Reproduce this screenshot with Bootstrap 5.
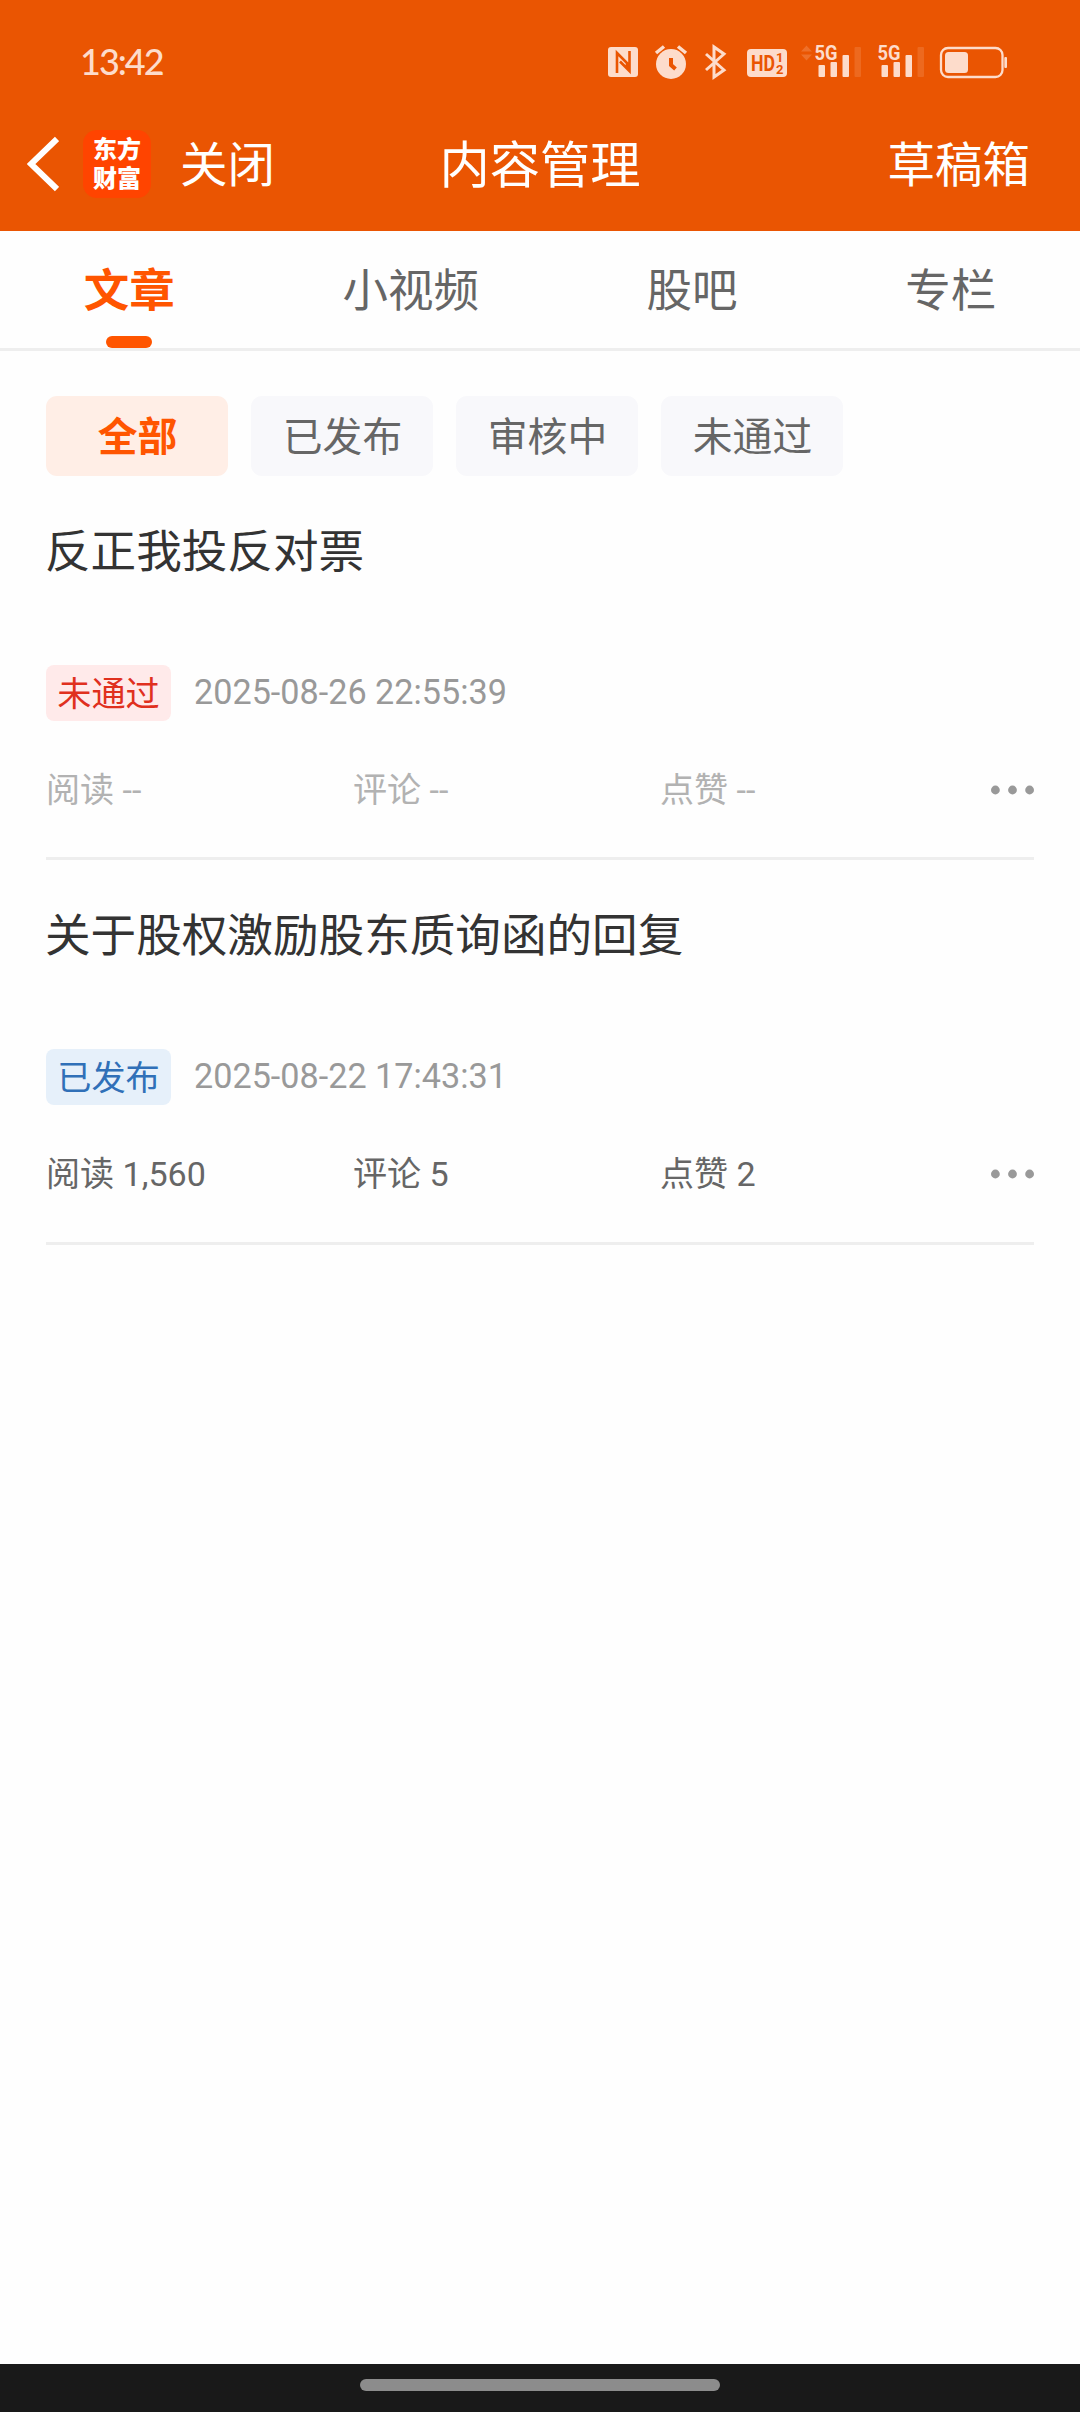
<!DOCTYPE html>
<html lang="zh-CN">
<head>
<meta charset="utf-8">
<meta name="viewport" content="width=device-width, initial-scale=1">
<title>内容管理</title>
<link href="https://cdn.jsdelivr.net/npm/bootstrap@5.3.0/dist/css/bootstrap.min.css" rel="stylesheet">
<style>
body { font-family: Roboto, "Noto Sans CJK SC", sans-serif; background: #fefefe; color: #333; line-height: 1; }
.app-head { background: #ea5502; height: 231px; }
.status-row { height: 124px; padding: 0 72px 0 80px; color: #fddccb; }
.clock { font: 500 36px Lato, sans-serif; letter-spacing: -2px; padding-bottom: 2px; }
.title-row { height: 80px; padding: 0 50px 0 27px; font-size: 47.5px; }
.title-row .side-link { padding-top: 6px; }
.page-title { font-size: 50.3px; line-height: 84px; }
.logo-box { width: 68px; height: 68px; border-radius: 14px; background: #ff4400; font: 900 24px/28.500px "Noto Sans CJK SC", sans-serif; margin-left: 24px; margin-right: 29px; padding-top: 4px; }
.tab-row { height: 120px; border-bottom: 3px solid #eee; font-size: 45.5px; color: #666; }
.tab-row .nav-link { color: #666; padding: 0; height: 117px; line-height: 121px; }
.tab-row .nav-link.active { color: #ff5500; font-weight: 700; }
.tab-row .nav-link.active::after { content: ""; position: absolute; left: 50%; bottom: 0; width: 46px; height: 12px; margin-left: -23px; border-radius: 6px; background: #ff5500; }
.main-pad { padding: 45px 46px 0; }
.chips { gap: 23px; }
.chips .btn { width: 182px; height: 80px; border: 0; border-radius: 11px; padding: 4px 0 0 1px; font-size: 39.8px; line-height: 80px; color: #666; background: #f8f8fb; display: flex; align-items: center; justify-content: center; }
.chips .btn.active { background: #ffeee6; color: #ff5500; font-weight: 700; }
.post { height: 384.5px; border-bottom: 3px solid #eee; padding-top: 46px; }
.post:first-of-type { height: 384px; }
.post-title { font-size: 45.6px; font-weight: 400; line-height: 62px; margin: 0 0 81px -1px; }
.tagline { height: 56px; font-size: 34.2px; color: #999; gap: 23px; }
.stamp { padding-bottom: 2px; }
.tag { width: 125px; height: 56px; border-radius: 8px; line-height: 58px; }
.tag-fail { background: #ffeaea; color: #e0301e; }
.tag-ok { background: #e6f0fa; color: #3070b8; }
.stats { margin-top: 45.5px; height: 46px; font-size: 34.1px; color: #666; }
.stats > span { width: 307px; line-height: 46px; }
.stats.dim { color: #b2b2b2; }
.foot { height: 48px; background: #191919; padding-top: 15px; }
.foot div { width: 360px; height: 12px; background: #8c8c8c; }
</style>
<script src="https://cdn.jsdelivr.net/npm/bootstrap@5.3.0/dist/js/bootstrap.bundle.min.js"></script>
</head>
<body>
<div class="d-flex flex-column vh-100 overflow-hidden">
  <header class="app-head flex-shrink-0">
    <div class="status-row d-flex justify-content-between align-items-center">
      <span class="clock">13:42</span>
      <svg width="400" height="40" viewBox="608 42 400 40" fill="currentColor">
        <!-- NFC -->
        <rect x="608" y="47" width="30" height="30" rx="3"/>
        <path d="M617 73V53L627 63V69M629.500 51V71L620 61.500" fill="none" stroke="#ea5502" stroke-width="2.600"/>
        <!-- alarm -->
        <circle cx="671" cy="64" r="15"/>
        <path d="M656 53l8-6.500M678 46.500l8 6.500" stroke="currentColor" stroke-width="3.500"/>
        <path d="M671 58v7l4.500 4" fill="none" stroke="#ea5502" stroke-width="4"/>
        <!-- bluetooth -->
        <path d="M706 54L724 70L714 77V47L724 54L706 70" fill="none" stroke="currentColor" stroke-width="3"/>
        <!-- HD -->
        <rect x="747" y="49" width="40" height="28" rx="4"/>
        <g fill="#ea5502" font-family="Roboto, sans-serif" font-weight="700">
          <text x="751" y="71" font-size="22" textLength="24" lengthAdjust="spacingAndGlyphs">HD</text>
          <text x="776" y="62" font-size="13">1</text>
          <text x="776" y="74" font-size="13">2</text>
        </g>
        <!-- 5G signals -->
        <path d="M801 51.500l5.500-6 5.500 6zM801 54.500l5.500 6 5.500-6z" opacity=".2"/>
        <g id="signal">
          <text x="814.500" y="60" font-family="Roboto, sans-serif" font-weight="700" font-size="21" textLength="23" lengthAdjust="spacingAndGlyphs">5G</text>
          <rect x="818.500" y="65" width="6.500" height="12" rx="1"/>
          <rect x="830.500" y="62" width="6.500" height="15" rx="1"/>
          <rect x="842.500" y="55" width="6.500" height="22" rx="1"/>
          <rect x="854.500" y="47" width="6.500" height="30" rx="1" opacity=".15"/>
        </g>
        <use href="#signal" x="63"/>
        <!-- battery -->
        <rect x="941" y="48" width="61.500" height="29" rx="7" fill="none" stroke="currentColor" stroke-width="2.300"/>
        <rect x="945" y="52" width="23" height="21" rx="3.500"/>
        <rect x="1004.300" y="57" width="2.700" height="11" rx="1"/>
      </svg>
    </div>
    <div class="title-row d-flex align-items-center justify-content-between position-relative text-white">
      <div class="d-flex align-items-center">
        <svg width="32" height="56" viewBox="0 0 32 56" fill="none" stroke="#fff" stroke-width="6"><path d="M30 3L4 28L30 53"/></svg>
        <div class="logo-box text-center">东方<br>财富</div>
        <span class="side-link">关闭</span>
      </div>
      <div class="page-title position-absolute top-0 start-50 translate-middle-x text-nowrap">内容管理</div>
      <span class="side-link">草稿箱</span>
    </div>
  </header>

  <nav class="nav tab-row justify-content-around flex-shrink-0">
    <a class="nav-link active position-relative" href="#">文章</a>
    <a class="nav-link" href="#">小视频</a>
    <a class="nav-link" href="#">股吧</a>
    <a class="nav-link" href="#">专栏</a>
  </nav>

  <main class="main-pad flex-grow-1">
    <div class="chips d-flex">
      <button class="btn active">全部</button>
      <button class="btn">已发布</button>
      <button class="btn">审核中</button>
      <button class="btn">未通过</button>
    </div>
    <article class="post">
      <h2 class="post-title">反正我投反对票</h2>
      <div class="tagline d-flex align-items-center"><span class="tag tag-fail text-center">未通过</span><span class="stamp">2025-08-26 22:55:39</span></div>
      <div class="stats dim d-flex align-items-center">
        <span>阅读 --</span><span>评论 --</span><span>点赞 --</span>
        <svg class="ms-auto" width="43" height="10" viewBox="0 0 43 10" fill="#999"><circle cx="4.400" cy="5" r="4.400"/><circle cx="21.500" cy="5" r="4.400"/><circle cx="38.600" cy="5" r="4.400"/></svg>
      </div>
    </article>
    <article class="post">
      <h2 class="post-title">关于股权激励股东质询函的回复</h2>
      <div class="tagline d-flex align-items-center"><span class="tag tag-ok text-center">已发布</span><span class="stamp">2025-08-22 17:43:31</span></div>
      <div class="stats d-flex align-items-center">
        <span>阅读 1,560</span><span>评论 5</span><span>点赞 2</span>
        <svg class="ms-auto" width="43" height="10" viewBox="0 0 43 10" fill="#999"><circle cx="4.400" cy="5" r="4.400"/><circle cx="21.500" cy="5" r="4.400"/><circle cx="38.600" cy="5" r="4.400"/></svg>
      </div>
    </article>
  </main>

  <footer class="foot flex-shrink-0"><div class="rounded-pill mx-auto"></div></footer>
</div>
</body>
</html>
